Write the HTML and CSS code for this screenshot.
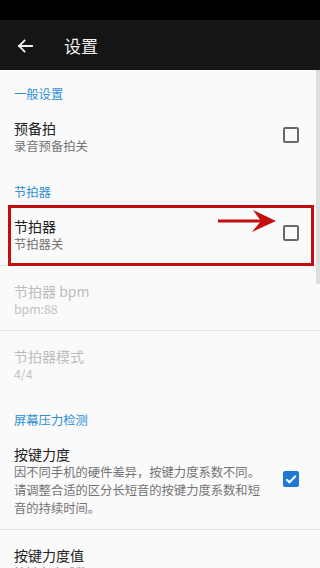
FILE: index.html
```html
<!DOCTYPE html>
<html lang="zh-CN">
<head>
<meta charset="utf-8">
<meta name="viewport" content="width=320">
<link rel="stylesheet" href="styles.css">
</head>
<body>
<div class="screen">
  <div class="statusbar"></div>
  <header class="toolbar">
    <svg class="back" width="16" height="14" viewBox="0 0 16 14">
      <path d="M15 7H2M7.5 1.5L2 7l5.5 5.5" fill="none" stroke="#f2f2f2" stroke-width="1.8" stroke-linecap="square"/>
    </svg>
    <span class="title">设置</span>
  </header>
  <main class="content">
    <div class="category">一般设置</div>
    <div class="item">
      <div class="texts">
        <div class="t">预备拍</div>
        <div class="s">录音预备拍关</div>
      </div>
      <span class="cb"></span>
    </div>
    <div class="category">节拍器</div>
    <div class="item divided">
      <div class="texts">
        <div class="t">节拍器</div>
        <div class="s">节拍器关</div>
      </div>
      <span class="cb"></span>
    </div>
    <div class="item divided disabled">
      <div class="texts">
        <div class="t">节拍器 bpm</div>
        <div class="s">bpm:88</div>
      </div>
    </div>
    <div class="item disabled">
      <div class="texts">
        <div class="t">节拍器模式</div>
        <div class="s">4/4</div>
      </div>
    </div>
    <div class="category">屏幕压力检测</div>
    <div class="item divided">
      <div class="texts">
        <div class="t">按键力度</div>
        <div class="s">因不同手机的硬件差异，按键力度系数不同。请调整合适的区分长短音的按键力度系数和短音的持续时间。</div>
      </div>
      <span class="cb checked">
        <svg width="12" height="10" viewBox="0 0 12 10"><path d="M1.3 5.2l3.2 3.1L10.8 1.8" fill="none" stroke="#fff" stroke-width="2"/></svg>
      </span>
    </div>
    <div class="item">
      <div class="texts">
        <div class="t">按键力度值</div>
        <div class="s">按键力度系数</div>
      </div>
    </div>
  </main>
  <div class="scrollthumb"></div>
  <div class="highlight"></div>
  <svg class="arrow" width="70" height="30" viewBox="0 0 70 30">
    <path d="M0 11H44" stroke="#c40e0e" stroke-width="3"/>
    <polygon points="35,0 58,11 34,22 43,11" fill="#c40e0e"/>
  </svg>
</div>
</body>
</html>
```
FILE: styles.css
```css
* { box-sizing: border-box; }
html, body {
  margin: 0;
  padding: 0;
  background: #fafafa;
}
body {
  font-family: "Noto Sans CJK SC", "Noto Sans", Roboto, sans-serif;
}
.screen {
  position: relative;
  width: 320px;
  height: 568px;
  overflow: hidden;
  background: #fafafa;
}
.statusbar {
  height: 20px;
  background: #000;
}
.toolbar {
  height: 50px;
  background: #151515;
  display: flex;
  align-items: center;
  padding-left: 17px;
}
.back {
  display: block;
  margin-top: 1px;
}
.title {
  margin-left: 31px;
  color: #f0f0f0;
  font-size: 17px;
  line-height: 20px;
  margin-top: 2px;
}
.content {
  display: flex;
  flex-direction: column;
}
.category {
  padding: 15px 14px 0;
  font-size: 12.3px;
  line-height: 18px;
  color: #2b8fd6;
}
.item {
  display: flex;
  align-items: center;
  padding: 16px 21px 13px 14px;
}
.item.divided {
  border-bottom: 1px solid #e3e3e3;
  padding-bottom: 12px;
}
.texts {
  flex: 1;
  min-width: 0;
}
.t {
  font-size: 14px;
  line-height: 18px;
  color: #212121;
}
.s {
  font-size: 12.3px;
  line-height: 18px;
  color: #737373;
  padding-right: 20px;
}
.disabled .t { color: #bdbdbd; }
.disabled .s { color: #c2c2c2; }
.cb {
  flex: none;
  width: 16px;
  height: 16px;
  border: 2px solid #6a6a6a;
  border-radius: 2px;
  margin-top: -5px;
  display: flex;
  align-items: center;
  justify-content: center;
}
.cb.checked {
  background: #1d78d6;
  border-color: #1d78d6;
}
.scrollthumb {
  position: absolute;
  right: 0;
  top: 70px;
  width: 4px;
  height: 214px;
  background: #dedede;
}
.highlight {
  position: absolute;
  left: 8px;
  top: 205px;
  width: 306px;
  height: 61px;
  border: 3px solid #c40e0e;
}
.arrow {
  position: absolute;
  left: 218px;
  top: 210px;
}
```
